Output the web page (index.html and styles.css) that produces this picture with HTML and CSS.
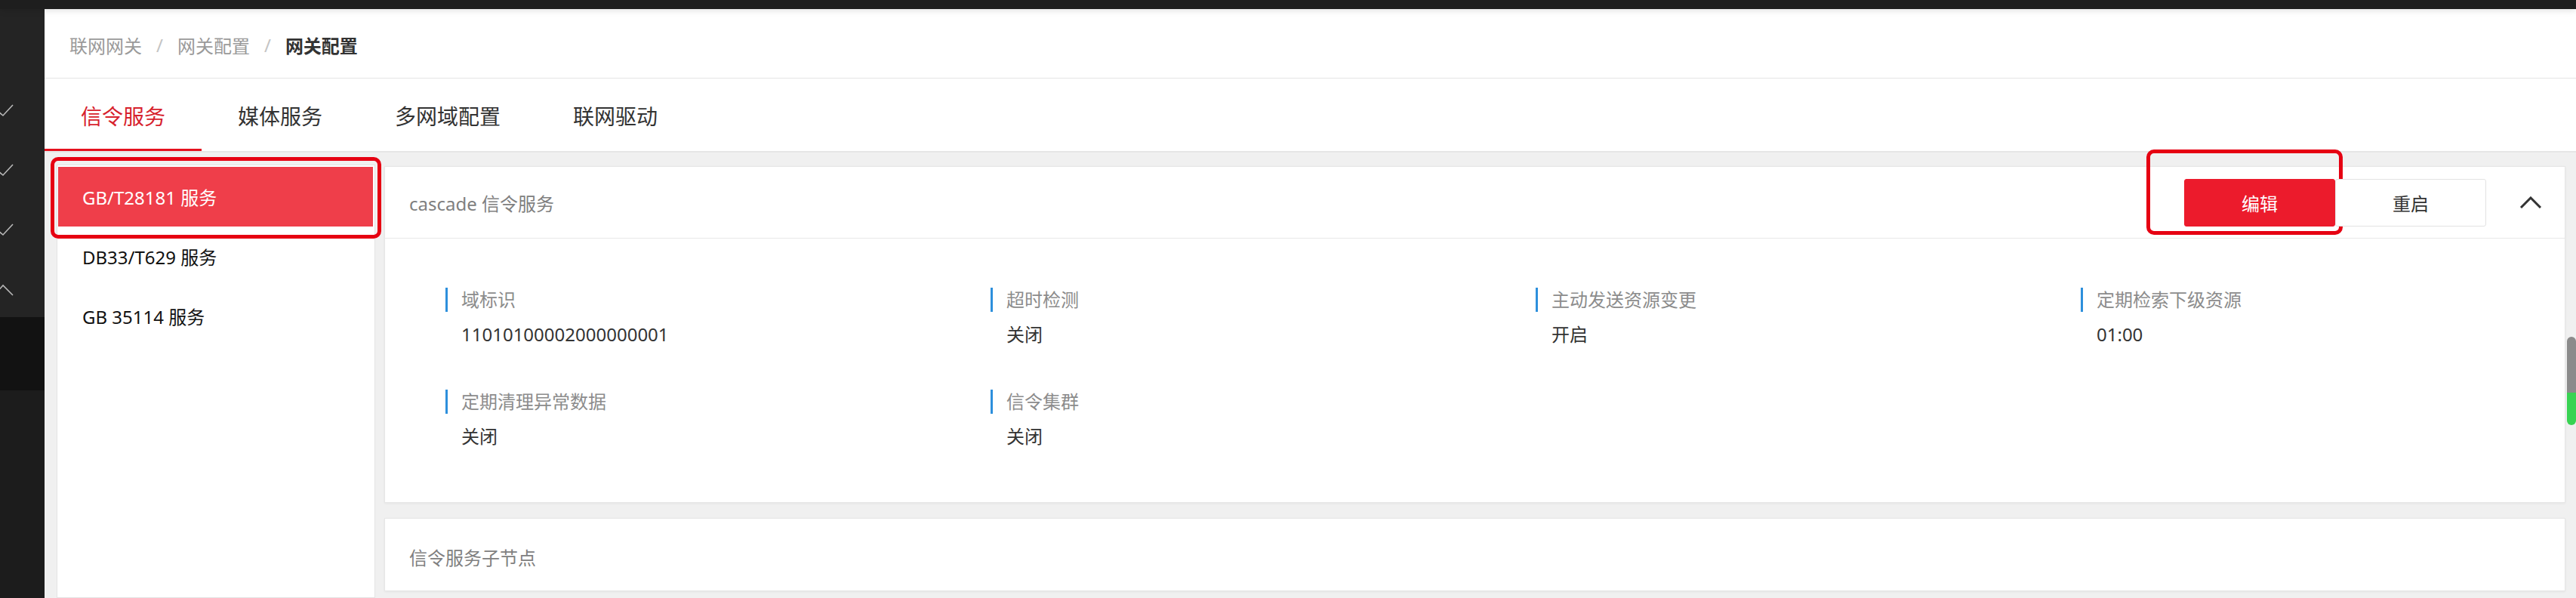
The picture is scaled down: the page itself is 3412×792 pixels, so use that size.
FILE: index.html
```html
<!DOCTYPE html>
<html lang="zh-CN">
<head>
<meta charset="utf-8">
<title>网关配置</title>
<link rel="stylesheet" href="styles.css">
</head>
<body>
<div class="topbar"></div>
<div class="app">
  <aside class="sidebar">
    <svg class="sb-icon" viewBox="0 0 18 18"><polyline points="-3,9 4,15 17,1"/></svg>
    <svg class="sb-icon" viewBox="0 0 18 18"><polyline points="-3,9 4,15 17,1"/></svg>
    <svg class="sb-icon" viewBox="0 0 18 18"><polyline points="-3,9 4,15 17,1"/></svg>
    <svg class="sb-icon" viewBox="0 0 18 18"><polyline points="-8,16 4,3 17,16"/></svg>
  </aside>
  <main class="content">
    <nav class="crumbs">
      <span class="crumb">联网网关</span><span class="sep">/</span><span class="crumb">网关配置</span><span class="sep">/</span><span class="crumb current">网关配置</span>
    </nav>
    <div class="tabs">
      <div class="tab active">信令服务</div>
      <div class="tab">媒体服务</div>
      <div class="tab">多网域配置</div>
      <div class="tab">联网驱动</div>
    </div>
    <div class="body">
      <div class="services">
        <div class="svc active">GB/T28181 服务<span class="mark mark-svc"></span></div>
        <div class="svc">DB33/T629 服务</div>
        <div class="svc">GB 35114 服务</div>
      </div>
      <div class="cards">
        <section class="card card-main">
          <header class="card-head">
            <span class="card-title">cascade 信令服务</span>
            <div class="actions">
              <button class="btn primary">编辑<span class="mark mark-edit"></span></button>
              <button class="btn">重启</button>
              <svg class="caret" viewBox="0 0 30 16"><polyline points="2,15 15,2 28,15"/></svg>
            </div>
          </header>
          <div class="fields">
            <div class="field"><div class="field-label">域标识</div><div class="field-value">11010100002000000001</div></div>
            <div class="field"><div class="field-label">超时检测</div><div class="field-value">关闭</div></div>
            <div class="field"><div class="field-label">主动发送资源变更</div><div class="field-value">开启</div></div>
            <div class="field"><div class="field-label">定期检索下级资源</div><div class="field-value">01:00</div></div>
            <div class="field"><div class="field-label">定期清理异常数据</div><div class="field-value">关闭</div></div>
            <div class="field"><div class="field-label">信令集群</div><div class="field-value">关闭</div></div>
          </div>
        </section>
        <section class="card card-sub">
          <span class="card-title">信令服务子节点</span>
        </section>
      </div>
    </div>
  </main>
</div>
<div class="scroll-thumb"></div>
</body>
</html>
```

FILE: styles.css
```css
html, body {
  margin: 0;
  height: 792px;
  overflow: hidden;
}
body {
  width: 3412px;
  font-family: "Noto Sans", "Noto Sans CJK SC", sans-serif;
  background: #f0f0f0;
  color: #333;
}
.topbar {
  height: 12px;
  background: #1e1e1e;
  box-shadow: 0 2px 8px rgba(0, 0, 0, 0.12);
  position: relative;
  z-index: 1;
}
.app {
  display: flex;
  height: 780px;
}
.sidebar {
  width: 59px;
  flex: none;
  box-sizing: border-box;
  background: linear-gradient(#242424 0 408px, #121212 408px 505px, #1c1c1c 505px);
  display: flex;
  flex-direction: column;
  gap: 61px;
  padding-top: 126px;
  overflow: hidden;
}
.sb-icon {
  width: 18px;
  height: 18px;
  overflow: visible;
}
.sb-icon polyline {
  fill: none;
  stroke: #b8b8b8;
  stroke-width: 1.6;
}
.content {
  flex: 1;
  min-width: 0;
  display: flex;
  flex-direction: column;
}
.crumbs {
  height: 92px;
  box-sizing: border-box;
  background: #fff;
  border-bottom: 1px solid #e4e4e4;
  display: flex;
  align-items: center;
  padding: 4px 0 0 33px;
  font-size: 24px;
  color: #9a9a9a;
}
.sep {
  margin: 0 19px;
  color: #c4c4c4;
}
.crumb.current {
  color: #333;
  font-weight: 700;
}
.tabs {
  height: 98px;
  box-sizing: border-box;
  background: #fff;
  border-bottom: 2px solid #e6e6e6;
  display: flex;
}
.tab {
  display: flex;
  align-items: center;
  padding: 5px 48px 0;
  font-size: 28px;
  color: #333;
  border-bottom: 3px solid transparent;
}
.tab.active {
  color: #d7222d;
  border-bottom-color: #e5101e;
}
.body {
  flex: 1;
  min-height: 0;
  display: flex;
  gap: 12px;
  padding: 16px 14px 0 16px;
}
.services {
  width: 422px;
  flex: none;
  box-sizing: border-box;
  background: #fff;
  border: 1px solid #e3e3e3;
  padding: 2px 2px 0 1px;
}
.svc {
  position: relative;
  height: 79px;
  display: flex;
  align-items: center;
  padding-left: 32px;
  font-size: 24px;
  color: #111;
}
.svc.active {
  background: #ef3e4a;
  color: #fff;
}
.mark {
  position: absolute;
  border: 5px solid #e60012;
  border-radius: 10px;
  pointer-events: none;
}
.mark-svc {
  left: -10px;
  right: -11px;
  top: -13px;
  bottom: -16px;
}
.mark-edit {
  left: -51px;
  right: -11px;
  top: -40px;
  bottom: -12px;
}
.cards {
  flex: 1;
  min-width: 0;
  display: flex;
  flex-direction: column;
  gap: 20px;
  padding-top: 2px;
}
.card {
  background: #fff;
  border: 1px solid #e6e6e6;
  box-shadow: 0 1px 3px rgba(0, 0, 0, 0.05);
}
.card-head {
  height: 95px;
  box-sizing: border-box;
  display: flex;
  align-items: center;
  padding: 0 30px 0 32px;
  border-bottom: 1px solid #e8e8e8;
}
.card-title {
  flex: 1;
  font-size: 24px;
  color: #808080;
}
.actions {
  display: flex;
  align-items: center;
}
.btn {
  position: relative;
  width: 200px;
  height: 63px;
  font: inherit;
  font-size: 24px;
  color: #333;
  background: #fff;
  border: 1px solid #e3e3e3;
  border-radius: 3px;
}
.btn.primary {
  background: #ec1b2c;
  border-color: #ec1b2c;
  color: #fff;
}
.caret {
  width: 30px;
  height: 16px;
  margin-left: 44px;
}
.caret polyline {
  fill: none;
  stroke: #333;
  stroke-width: 3;
}
.card-main {
  padding-bottom: 71px;
}
.fields {
  display: grid;
  grid-template-columns: repeat(4, 722px);
  row-gap: 57px;
  padding: 65px 0 0 80px;
}
.field-label {
  height: 32px;
  line-height: 32px;
  border-left: 3px solid #2d8fdc;
  padding-left: 18px;
  font-size: 24px;
  color: #8c8c8c;
}
.field-value {
  margin-top: 14px;
  line-height: 32px;
  padding-left: 21px;
  font-size: 24px;
  color: #333;
}
.card-sub {
  height: 97px;
  box-sizing: border-box;
  display: flex;
  align-items: center;
  padding: 6px 0 0 32px;
}
.scroll-thumb {
  position: absolute;
  left: 3400px;
  top: 446px;
  width: 12px;
  height: 117px;
  border-radius: 6px;
  background: linear-gradient(#8b8b8b 0 74px, #39d353 74px);
}
```
